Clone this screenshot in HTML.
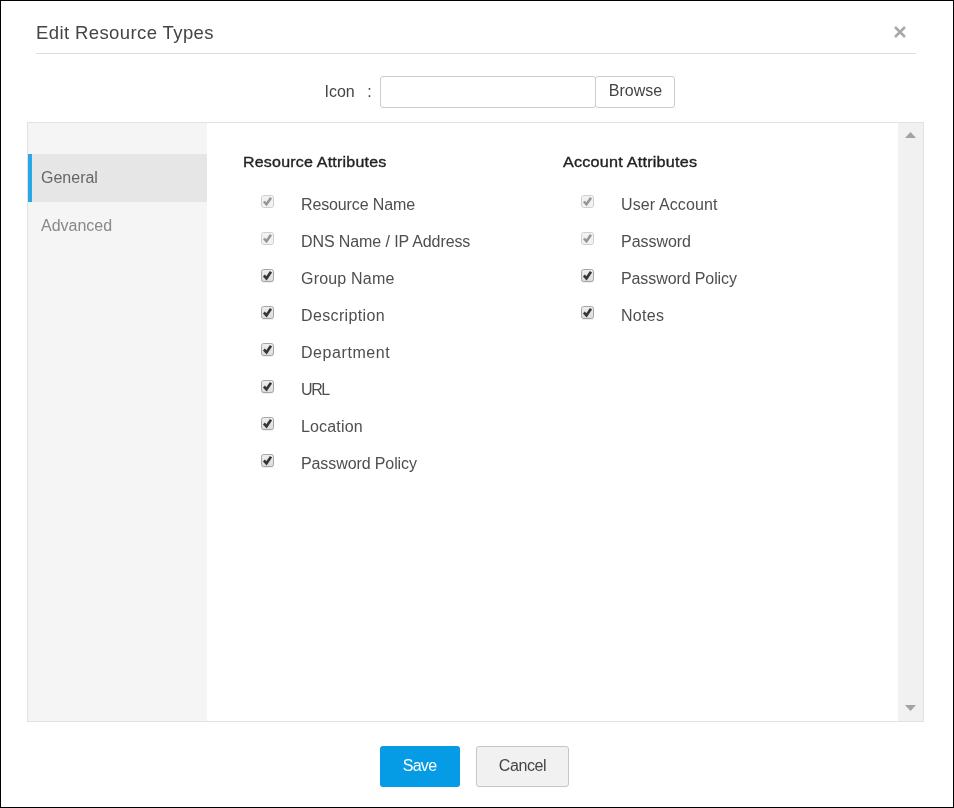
<!DOCTYPE html>
<html><head><meta charset="utf-8">
<style>
*{box-sizing:border-box;margin:0;padding:0}
html,body{width:954px;height:808px;overflow:hidden;background:#fff}
body{font-family:"Liberation Sans",sans-serif;color:#333;position:relative}
.frame{position:absolute;left:0;top:0;width:954px;height:808px;border:1px solid #000;border-left-width:1px}
.title{position:absolute;left:36px;top:19.5px;font-size:18.5px;color:#444;line-height:26px;letter-spacing:0.4px}
.close{position:absolute;left:894px;top:26px;width:12px;height:12px}
.hr{position:absolute;left:36px;top:53px;width:880px;height:1px;background:#dcdcdc}
.lbl{position:absolute;top:81px;left:324.5px;font-size:16px;color:#444;line-height:22px}
.inp{position:absolute;left:380px;top:76px;width:216px;height:32px;border:1px solid #ccc;border-radius:3px;background:#fff}
.browse{position:absolute;left:595px;top:76px;width:80px;padding-left:1px;height:32px;border:1px solid #ccc;border-radius:3px;background:#fff;font-size:16px;color:#444;text-align:center;line-height:27px}
.panel{position:absolute;left:27px;top:122px;width:897px;height:600px;border:1px solid #e2e2e2;background:#fff}
.side{position:absolute;left:0;top:0;width:179px;height:598px;background:#f5f5f5}
.tab{position:absolute;left:0;width:179px;height:48px;font-size:16px;line-height:48px;padding-left:13px;color:#888}
.tab.act{background:#e6e6e6;color:#666;border-left:4px solid #29a8e8;padding-left:9px}
.sb{position:absolute;right:0;top:0;width:25px;height:598px;background:#f1f1f1}
.h{position:absolute;font-size:15px;transform-origin:0 0;white-space:nowrap;color:#222;line-height:20px;font-weight:normal;-webkit-text-stroke:0.35px #222}
.it{position:absolute;font-size:16px;color:#4e4e4e;line-height:20px}
.cb{position:absolute;width:13px;height:13px}
.btn{position:absolute;top:746px;height:41px;font-size:16px;text-align:center;line-height:40px;border-radius:3px}
.save{left:380px;width:80px;letter-spacing:-0.7px;padding-right:1px;background:#059be5;color:#fff}
.cancel{left:476px;width:93px;letter-spacing:-0.4px;background:#f1f1f1;border:1px solid #c6c6c6;color:#444;line-height:38px}
.wrap{position:absolute;left:0;top:0;width:954px;height:808px;will-change:transform;background:#fff}
</style></head><body><div class="wrap">
<svg width="0" height="0" style="position:absolute"><defs><linearGradient id="cg" x1="0" y1="0" x2="0" y2="1"><stop offset="0" stop-color="#efefef"/><stop offset="1" stop-color="#dcdcdc"/></linearGradient></defs></svg>
<div class="title">Edit Resource Types</div>
<svg class="close" viewBox="0 0 12 12"><path d="M1 1L11 11M11 1L1 11" stroke="#a8a8a8" stroke-width="2.5" fill="none"/></svg>
<div class="hr"></div>
<div class="lbl">Icon<span style="margin-left:12.5px">:</span></div>
<div class="inp"></div>
<div class="browse">Browse</div>
<div class="panel">
 <div class="side">
  <div class="tab act" style="top:31px">General</div>
  <div class="tab" style="top:79px">Advanced</div>
 </div>
 <div class="sb">
  <svg style="position:absolute;left:7px;top:9px" width="11" height="6" viewBox="0 0 11 6"><path d="M0 6L5.5 0L11 6Z" fill="#a3a3a3"/></svg>
  <svg style="position:absolute;left:7px;top:582px" width="11" height="6" viewBox="0 0 11 6"><path d="M0 0L5.5 6L11 0Z" fill="#a3a3a3"/></svg>
 </div>
</div>
<!--ITEMS-->
<div class="h" style="left:243px;top:151.5px;letter-spacing:0.2px;transform:scaleX(1.065)">Resource Attributes</div>
<div class="h" style="left:563.4px;top:151.5px;letter-spacing:0.2px;transform:scaleX(1.078)">Account Attributes</div>
<svg class="cb" style="left:261px;top:195px" viewBox="0 0 13 13"><rect x="0.5" y="0.5" width="12" height="12" rx="2.2" fill="#f1f1f1" stroke="#d0d0d0"/><path d="M2.9 6.5L5.5 9.3L10 2.7" stroke="#969696" stroke-width="2.5" fill="none"/></svg>
<div class="it" style="left:301px;top:195px;letter-spacing:-0.13px">Resource Name</div>
<svg class="cb" style="left:261px;top:232px" viewBox="0 0 13 13"><rect x="0.5" y="0.5" width="12" height="12" rx="2.2" fill="#f1f1f1" stroke="#d0d0d0"/><path d="M2.9 6.5L5.5 9.3L10 2.7" stroke="#969696" stroke-width="2.5" fill="none"/></svg>
<div class="it" style="left:301px;top:232px;letter-spacing:-0.1px">DNS Name / IP Address</div>
<svg class="cb" style="left:261px;top:269px;overflow:visible" viewBox="0 0 13 13"><rect x="0.3" y="1.2" width="12.4" height="12.6" rx="2.5" fill="#000" fill-opacity="0.09"/><rect x="0.5" y="0.5" width="12" height="12" rx="2.2" fill="url(#cg)" stroke="#a6a6a6"/><path d="M2.9 6.5L5.5 9.3L10 2.7" stroke="#363636" stroke-width="2.6" fill="none"/></svg>
<div class="it" style="left:301px;top:269px;letter-spacing:0.2px">Group Name</div>
<svg class="cb" style="left:261px;top:306px;overflow:visible" viewBox="0 0 13 13"><rect x="0.3" y="1.2" width="12.4" height="12.6" rx="2.5" fill="#000" fill-opacity="0.09"/><rect x="0.5" y="0.5" width="12" height="12" rx="2.2" fill="url(#cg)" stroke="#a6a6a6"/><path d="M2.9 6.5L5.5 9.3L10 2.7" stroke="#363636" stroke-width="2.6" fill="none"/></svg>
<div class="it" style="left:301px;top:306px;letter-spacing:0.36px">Description</div>
<svg class="cb" style="left:261px;top:343px;overflow:visible" viewBox="0 0 13 13"><rect x="0.3" y="1.2" width="12.4" height="12.6" rx="2.5" fill="#000" fill-opacity="0.09"/><rect x="0.5" y="0.5" width="12" height="12" rx="2.2" fill="url(#cg)" stroke="#a6a6a6"/><path d="M2.9 6.5L5.5 9.3L10 2.7" stroke="#363636" stroke-width="2.6" fill="none"/></svg>
<div class="it" style="left:301px;top:343px;letter-spacing:0.56px">Department</div>
<svg class="cb" style="left:261px;top:380px;overflow:visible" viewBox="0 0 13 13"><rect x="0.3" y="1.2" width="12.4" height="12.6" rx="2.5" fill="#000" fill-opacity="0.09"/><rect x="0.5" y="0.5" width="12" height="12" rx="2.2" fill="url(#cg)" stroke="#a6a6a6"/><path d="M2.9 6.5L5.5 9.3L10 2.7" stroke="#363636" stroke-width="2.6" fill="none"/></svg>
<div class="it" style="left:301px;top:380px;letter-spacing:-1.4px">URL</div>
<svg class="cb" style="left:261px;top:417px;overflow:visible" viewBox="0 0 13 13"><rect x="0.3" y="1.2" width="12.4" height="12.6" rx="2.5" fill="#000" fill-opacity="0.09"/><rect x="0.5" y="0.5" width="12" height="12" rx="2.2" fill="url(#cg)" stroke="#a6a6a6"/><path d="M2.9 6.5L5.5 9.3L10 2.7" stroke="#363636" stroke-width="2.6" fill="none"/></svg>
<div class="it" style="left:301px;top:417px;letter-spacing:0.16px">Location</div>
<svg class="cb" style="left:261px;top:454px;overflow:visible" viewBox="0 0 13 13"><rect x="0.3" y="1.2" width="12.4" height="12.6" rx="2.5" fill="#000" fill-opacity="0.09"/><rect x="0.5" y="0.5" width="12" height="12" rx="2.2" fill="url(#cg)" stroke="#a6a6a6"/><path d="M2.9 6.5L5.5 9.3L10 2.7" stroke="#363636" stroke-width="2.6" fill="none"/></svg>
<div class="it" style="left:301px;top:454px;letter-spacing:-0.1px">Password Policy</div>
<svg class="cb" style="left:581px;top:195px" viewBox="0 0 13 13"><rect x="0.5" y="0.5" width="12" height="12" rx="2.2" fill="#f1f1f1" stroke="#d0d0d0"/><path d="M2.9 6.5L5.5 9.3L10 2.7" stroke="#969696" stroke-width="2.5" fill="none"/></svg>
<div class="it" style="left:621px;top:195px;letter-spacing:0.11px">User Account</div>
<svg class="cb" style="left:581px;top:232px" viewBox="0 0 13 13"><rect x="0.5" y="0.5" width="12" height="12" rx="2.2" fill="#f1f1f1" stroke="#d0d0d0"/><path d="M2.9 6.5L5.5 9.3L10 2.7" stroke="#969696" stroke-width="2.5" fill="none"/></svg>
<div class="it" style="left:621px;top:232px;letter-spacing:-0.04px">Password</div>
<svg class="cb" style="left:581px;top:269px;overflow:visible" viewBox="0 0 13 13"><rect x="0.3" y="1.2" width="12.4" height="12.6" rx="2.5" fill="#000" fill-opacity="0.09"/><rect x="0.5" y="0.5" width="12" height="12" rx="2.2" fill="url(#cg)" stroke="#a6a6a6"/><path d="M2.9 6.5L5.5 9.3L10 2.7" stroke="#363636" stroke-width="2.6" fill="none"/></svg>
<div class="it" style="left:621px;top:269px;letter-spacing:-0.1px">Password Policy</div>
<svg class="cb" style="left:581px;top:306px;overflow:visible" viewBox="0 0 13 13"><rect x="0.3" y="1.2" width="12.4" height="12.6" rx="2.5" fill="#000" fill-opacity="0.09"/><rect x="0.5" y="0.5" width="12" height="12" rx="2.2" fill="url(#cg)" stroke="#a6a6a6"/><path d="M2.9 6.5L5.5 9.3L10 2.7" stroke="#363636" stroke-width="2.6" fill="none"/></svg>
<div class="it" style="left:621px;top:306px;letter-spacing:0.3px">Notes</div>
<!--/ITEMS-->
<div class="btn save">Save</div>
<div class="btn cancel">Cancel</div>
<div class="frame"></div>
</div></body></html>
